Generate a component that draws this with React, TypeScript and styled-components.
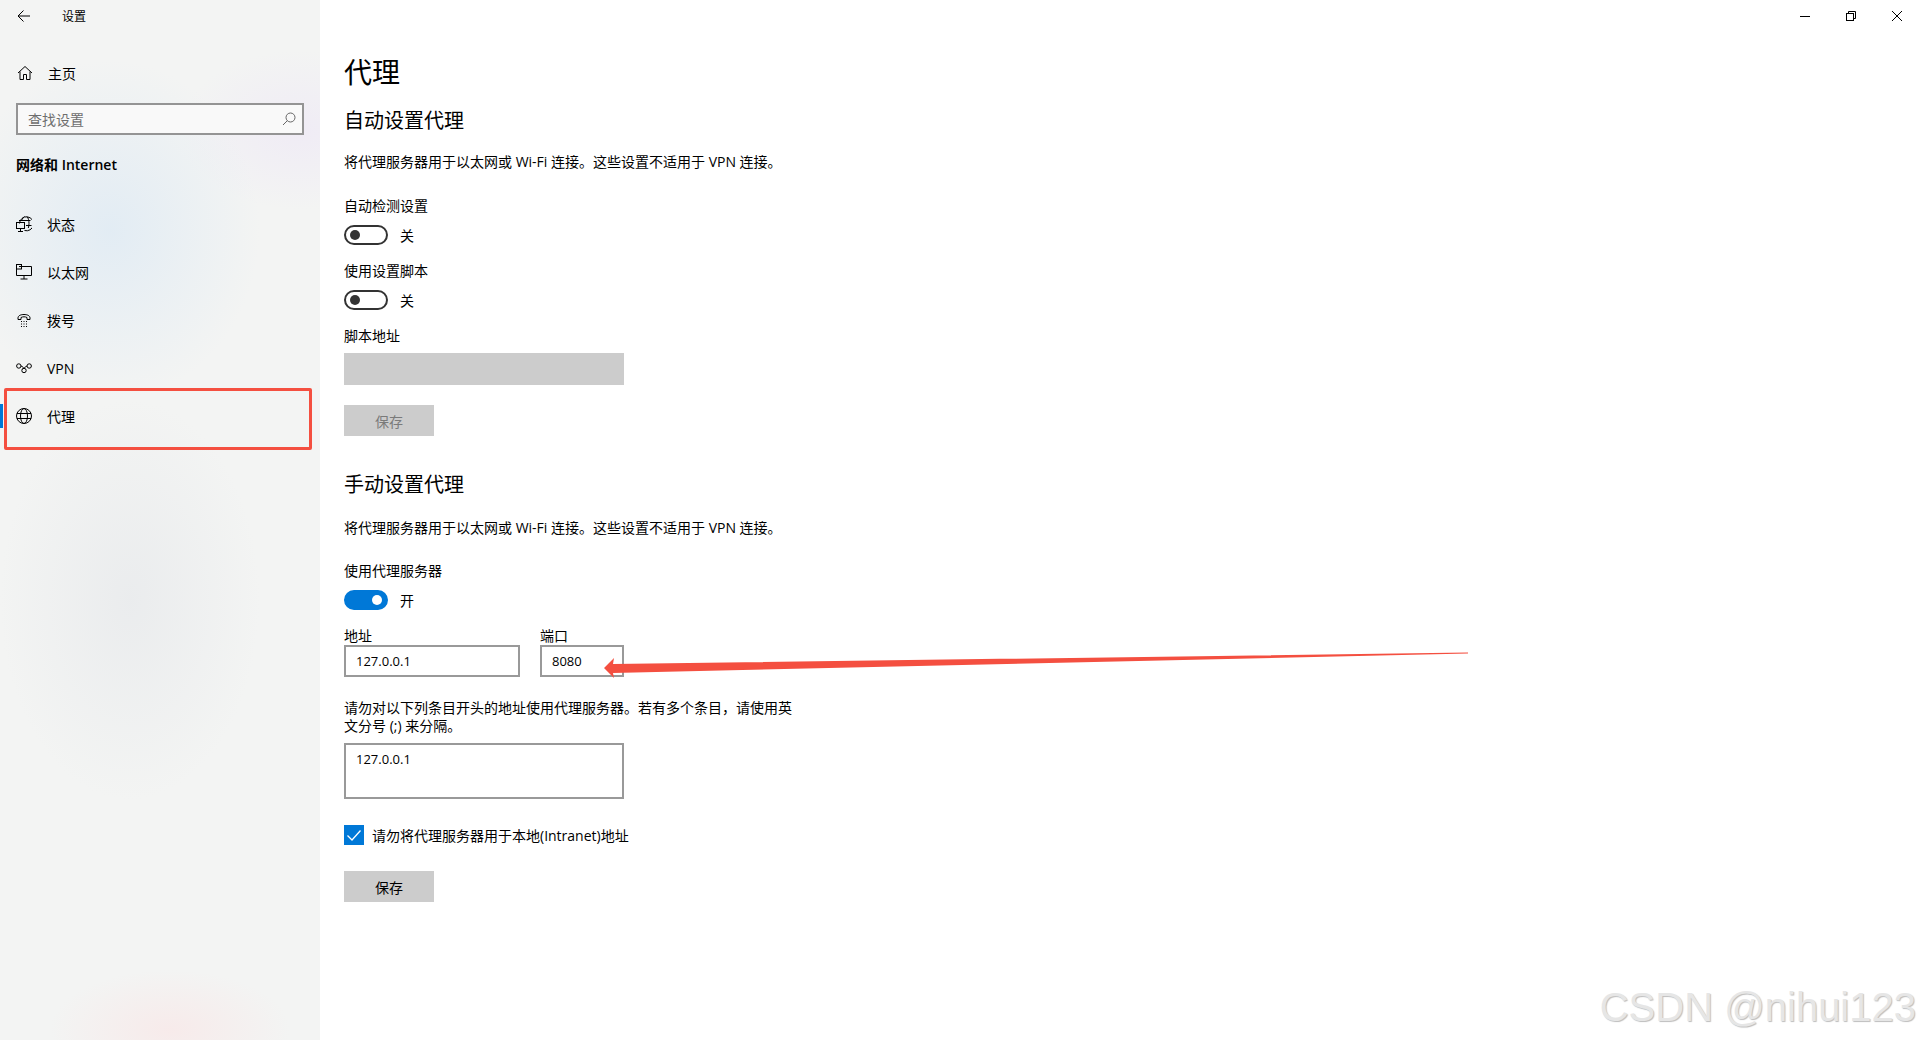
import React from 'react';
import styled, { createGlobalStyle } from 'styled-components';

const GlobalStyle = createGlobalStyle`
  html, body {
    margin: 0;
    height: 100%;
    background: #ffffff;
  }
  * {
    box-sizing: border-box;
  }
  body {
    font-family: "Open Sans", "Noto Sans CJK SC", sans-serif;
    font-size: 14px;
    color: #000;
    overflow: hidden;
  }
`;

const Page = styled.div`
  position: relative;
  display: flex;
  width: 1920px;
  height: 1040px;
  overflow: hidden;
`;

const Sidebar = styled.aside`
  width: 320px;
  flex-shrink: 0;
  height: 100%;
  display: flex;
  flex-direction: column;
  background:
    radial-gradient(ellipse 150px 170px at 110px 230px, rgba(222, 234, 244, .8), transparent),
    radial-gradient(ellipse 130px 200px at 130px 600px, rgba(232, 234, 236, .8), transparent),
    radial-gradient(ellipse 120px 80px at 300px 130px, rgba(238, 232, 246, .7), transparent),
    radial-gradient(ellipse 120px 60px at 170px 1030px, rgba(248, 232, 232, .8), transparent),
    #f3f4f3;
`;

const SideTop = styled.div`
  height: 32px;
  display: flex;
  align-items: center;
  padding-left: 17px;
  font-size: 12px;
`;

const TopTitle = styled.span`
  margin-left: 31px;
`;

const HomeRow = styled.div`
  height: 48px;
  margin-top: 17px;
  display: flex;
  align-items: center;
  padding-left: 17px;
  gap: 15px;
  font-size: 14px;
`;

const SearchBox = styled.div`
  width: 288px;
  height: 32px;
  margin: 6px 0 0 16px;
  border: 2px solid #949494;
  background: #f9f9f9;
  display: flex;
  align-items: center;
  justify-content: space-between;
  padding: 0 6px 0 10px;
  color: #6e6e6e;
  font-size: 14px;
`;

const GroupTitle = styled.div`
  margin: 20px 0 0 16px;
  line-height: 20px;
  font-size: 14px;
  font-weight: 600;
`;

const NavList = styled.nav`
  margin-top: 25px;
  display: flex;
  flex-direction: column;
`;

const NavItem = styled.div<{ $active?: boolean }>`
  position: relative;
  height: 48px;
  display: flex;
  align-items: center;
  padding-left: 16px;
  gap: 15px;
  font-size: 14px;

  &::before {
    content: "";
    display: ${p => (p.$active ? 'block' : 'none')};
    position: absolute;
    left: 0;
    top: 12px;
    width: 3px;
    height: 24px;
    background: #0078d7;
  }
`;

const NavIcon = styled.svg`
  width: 16px;
  height: 16px;
  flex-shrink: 0;
  fill: none;
  stroke: #000;
  stroke-width: 1;
`;

const Main = styled.main`
  flex: 1;
  display: flex;
  flex-direction: column;
  padding-left: 24px;
`;

const TitleBar = styled.div`
  height: 32px;
  display: flex;
  justify-content: flex-end;
  align-items: center;
`;

const WindowButton = styled.div`
  width: 46px;
  height: 32px;
  display: flex;
  align-items: center;
  justify-content: center;
`;

const PageTitle = styled.h1`
  margin: 20px 0 0;
  font-size: 28px;
  line-height: 40px;
  font-weight: 400;
`;

const SectionTitle = styled.h2<{ $top: number }>`
  margin: ${p => p.$top}px 0 0;
  font-size: 20px;
  line-height: 28px;
  font-weight: 400;
`;

const Text = styled.p<{ $top: number }>`
  margin: ${p => p.$top}px 0 0;
  font-size: 14px;
  line-height: 20px;
`;

const ToggleRow = styled.div`
  margin-top: 9px;
  height: 20px;
  display: flex;
  align-items: center;
  gap: 12px;
  font-size: 14px;
`;

const ToggleTrack = styled.div<{ $on?: boolean }>`
  width: 44px;
  height: 20px;
  border-radius: 10px;
  border: 2px solid ${p => (p.$on ? '#0078d7' : '#333')};
  background: ${p => (p.$on ? '#0078d7' : 'transparent')};
  display: flex;
  align-items: center;
  justify-content: ${p => (p.$on ? 'flex-end' : 'flex-start')};
  padding: 0 4px;
`;

const ToggleKnob = styled.div<{ $on?: boolean }>`
  width: 10px;
  height: 10px;
  border-radius: 50%;
  background: ${p => (p.$on ? '#fff' : '#333')};
`;

const DisabledInput = styled.div`
  width: 280px;
  height: 32px;
  margin-top: 7px;
  background: #cccccc;
`;

const SaveButton = styled.div<{ $top: number; $disabled?: boolean }>`
  width: 90px;
  height: 31px;
  margin-top: ${p => p.$top}px;
  background: #cccccc;
  color: ${p => (p.$disabled ? '#7a7a7a' : '#000')};
  display: flex;
  align-items: center;
  justify-content: center;
  font-size: 14px;
`;

const FieldRow = styled.div`
  margin-top: 17px;
  display: flex;
  gap: 20px;
`;

const Field = styled.div`
  display: flex;
  flex-direction: column;
`;

const FieldLabel = styled.label`
  font-size: 14px;
  line-height: 18px;
`;

const TextInput = styled.input<{ $width: number }>`
  width: ${p => p.$width}px;
  height: 32px;
  border: 2px solid #999999;
  border-radius: 0;
  outline: none;
  padding: 0 10px;
  background: #fff;
  color: #000;
  font-family: inherit;
  font-size: 13px;
`;

const HelpText = styled.p`
  width: 460px;
  margin: 22px 0 0;
  font-size: 14px;
  line-height: 18px;
`;

const TextArea = styled.textarea`
  display: block;
  width: 280px;
  height: 56px;
  margin-top: 8px;
  border: 2px solid #999999;
  border-radius: 0;
  outline: none;
  resize: none;
  padding: 4px 10px;
  background: #fff;
  color: #000;
  font-family: inherit;
  font-size: 13px;
  line-height: 20px;
`;

const CheckRow = styled.div`
  margin-top: 26px;
  height: 20px;
  display: flex;
  align-items: center;
  gap: 8px;
  font-size: 14px;
`;

const CheckBox = styled.div`
  width: 20px;
  height: 20px;
  background: #0078d7;
  display: flex;
  align-items: center;
  justify-content: center;
`;

const Highlight = styled.div`
  position: absolute;
  left: 4px;
  top: 388px;
  width: 308px;
  height: 62px;
  border: 3px solid #f44f40;
  border-radius: 2px;
  pointer-events: none;
`;

const ArrowOverlay = styled.svg`
  position: absolute;
  left: 600px;
  top: 645px;
  width: 880px;
  height: 40px;
  pointer-events: none;
`;

const Watermark = styled.div`
  position: absolute;
  right: 4px;
  bottom: 10px;
  font-family: "Liberation Sans", sans-serif;
  font-size: 40px;
  line-height: 46px;
  color: #e6e6e6;
  text-shadow: 1px 1px 1px #bdbdbd;
`;

const navItems = [
  {
    label: '状态',
    icon: (
      <>
        <path d="M3.5 7.5a7 7 0 1 1 5 7" />
        <path d="M5.5 5c.8-2.500 2-4 3-4.500M11 .8c1.300 1.200 2 3.500 2 6.700 0 1.500-.2 3-.7 4.500M3 4.500h11.500M10 9.500h5.500" />
        <rect x=".5" y="6.500" width="8" height="6" />
        <path d="M4.500 12.500v2.500M2 15.500h5" />
      </>
    ),
  },
  {
    label: '以太网',
    icon: (
      <>
        <path d="M3 2.500H15.500V11.500H.5V5" />
        <rect x=".5" y=".5" width="5" height="4.500" />
        <path d="M8 11.500v3.500M4.500 15h7" />
      </>
    ),
  },
  {
    label: '拨号',
    icon: (
      <>
        <path d="M2 7.500V6C2 3.500 5 2.500 8 2.500S14 3.500 14 6v1.500h-3V5.500C10 5 9 4.800 8 4.800S6 5 5 5.500v2H2z" />
        <path d="M5 9.500h1M7.500 9.500h1M10 9.500h1M5 12h1M7.500 12h1M10 12h1M5 14.500h1M7.500 14.500h1M10 14.500h1" />
      </>
    ),
  },
  {
    label: 'VPN',
    icon: (
      <>
        <circle cx="2.800" cy="6" r="2.200" />
        <circle cx="13.200" cy="6" r="2.200" />
        <circle cx="8" cy="10.500" r="2.200" />
        <path d="M5 6c2 .5 2.500 2 3 2.300M11 6c-1.500.5-3 2.500-4.500 3" />
      </>
    ),
  },
  {
    label: '代理',
    active: true,
    icon: (
      <>
        <circle cx="8" cy="8" r="7.500" />
        <ellipse cx="8" cy="8" rx="3.500" ry="7.500" />
        <path d="M1 5.500h14M1 10.500h14" />
      </>
    ),
  },
];

function WindowControls() {
  return (
    <TitleBar>
      <WindowButton>
        <svg width="10" height="10" viewBox="0 0 10 10"><path d="M0 5.500h10" stroke="#000" /></svg>
      </WindowButton>
      <WindowButton>
        <svg width="10" height="10" viewBox="0 0 10 10" fill="none" stroke="#000">
          <rect x=".5" y="2.500" width="7" height="7" />
          <path d="M2.500 2.500V.5h7v7h-2" />
        </svg>
      </WindowButton>
      <WindowButton>
        <svg width="10" height="10" viewBox="0 0 10 10"><path d="M0 0l10 10M10 0L0 10" stroke="#000" /></svg>
      </WindowButton>
    </TitleBar>
  );
}

function Toggle({ on }: { on?: boolean }) {
  return (
    <ToggleRow>
      <ToggleTrack $on={on}><ToggleKnob $on={on} /></ToggleTrack>
      {on ? '开' : '关'}
    </ToggleRow>
  );
}

export default function App() {
  return (
    <Page>
      <GlobalStyle />
      <Sidebar>
        <SideTop>
          <svg width="14" height="14" viewBox="0 0 14 14" fill="none" stroke="#000">
            <path d="M1 7h12M6.500 1.500L1 7l5.500 5.500" />
          </svg>
          <TopTitle>设置</TopTitle>
        </SideTop>
        <HomeRow>
          <NavIcon viewBox="0 0 16 16">
            <path d="M1 8L8 1.500 15 8M3 6.500V14.500H6.500V9.500H9.500V14.500H13V6.500" />
          </NavIcon>
          主页
        </HomeRow>
        <SearchBox>
          查找设置
          <svg width="14" height="14" viewBox="0 0 14 14" fill="none" stroke="#666">
            <circle cx="8.500" cy="5.500" r="4.500" />
            <path d="M5.300 8.700L1 13" />
          </svg>
        </SearchBox>
        <GroupTitle>网络和 Internet</GroupTitle>
        <NavList>
          {navItems.map(item => (
            <NavItem key={item.label} $active={item.active}>
              <NavIcon viewBox="0 0 16 16">{item.icon}</NavIcon>
              {item.label}
            </NavItem>
          ))}
        </NavList>
      </Sidebar>
      <Main>
        <WindowControls />
        <PageTitle>代理</PageTitle>
        <SectionTitle $top={15}>自动设置代理</SectionTitle>
        <Text $top={17}>将代理服务器用于以太网或 Wi-Fi 连接。这些设置不适用于 VPN 连接。</Text>
        <Text $top={24}>自动检测设置</Text>
        <Toggle />
        <Text $top={16}>使用设置脚本</Text>
        <Toggle />
        <Text $top={16}>脚本地址</Text>
        <DisabledInput />
        <SaveButton $top={20} $disabled>保存</SaveButton>
        <SectionTitle $top={35}>手动设置代理</SectionTitle>
        <Text $top={19}>将代理服务器用于以太网或 Wi-Fi 连接。这些设置不适用于 VPN 连接。</Text>
        <Text $top={23}>使用代理服务器</Text>
        <Toggle on />
        <FieldRow>
          <Field>
            <FieldLabel>地址</FieldLabel>
            <TextInput $width={176} value="127.0.0.1" readOnly />
          </Field>
          <Field>
            <FieldLabel>端口</FieldLabel>
            <TextInput $width={84} value="8080" readOnly />
          </Field>
        </FieldRow>
        <HelpText>请勿对以下列条目开头的地址使用代理服务器。若有多个条目，请使用英文分号 (;) 来分隔。</HelpText>
        <TextArea value="127.0.0.1" readOnly />
        <CheckRow>
          <CheckBox>
            <svg width="16" height="16" viewBox="0 0 16 16" fill="none" stroke="#fff" strokeWidth="1.300">
              <path d="M1.500 8.500L6 13 14.500 3.500" />
            </svg>
          </CheckBox>
          请勿将代理服务器用于本地(Intranet)地址
        </CheckRow>
        <SaveButton $top={26}>保存</SaveButton>
      </Main>
      <Highlight />
      <ArrowOverlay viewBox="0 0 880 40">
        <path d="M4 23L14 13 13 19 868 7.600 868 8.600 13 28 14 33z" fill="#f44f40" />
      </ArrowOverlay>
      <Watermark>CSDN @nihui123</Watermark>
    </Page>
  );
}
